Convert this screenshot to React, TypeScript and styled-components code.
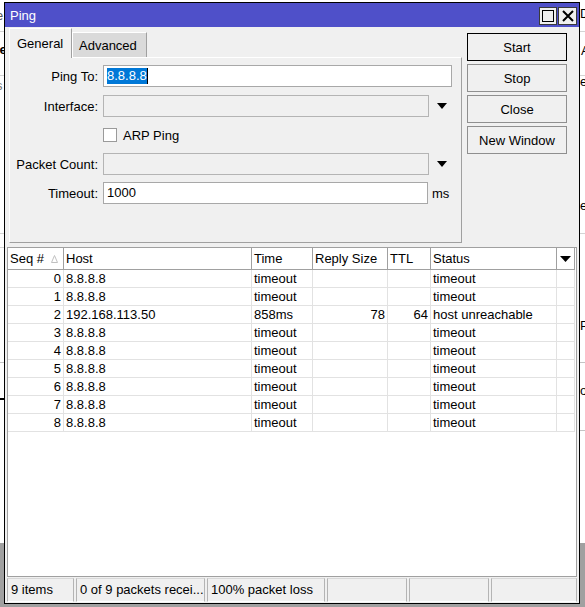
import React from 'react';
import styled, { createGlobalStyle } from 'styled-components';

const GlobalStyle = createGlobalStyle`
  html, body { margin: 0; padding: 0; }
  body {
    font-family: "Liberation Sans", Arial, sans-serif;
    font-size: 13px;
    color: #000;
    background: #fff;
  }
  * { box-sizing: border-box; }
`;

const Desktop = styled.div`
  position: relative;
  width: 585px;
  height: 607px;
  overflow: hidden;
  background: #fff;
`;

/* ---------- background window fragments (behind the Ping window) ---------- */
const BackRule = styled.div<{ $top: number; $color?: string; $h?: number; $side?: 'left' | 'right' }>`
  position: absolute;
  left: ${(p) => (p.$side === 'right' ? '560px' : '0')};
  right: ${(p) => (p.$side === 'left' ? '560px' : '0')};
  top: ${(p) => p.$top}px;
  height: ${(p) => p.$h ?? 1}px;
  background: ${(p) => p.$color ?? '#d4d4d4'};
`;

const BackFill = styled.div<{ $top: number }>`
  position: absolute;
  left: 0;
  right: 0;
  top: ${(p) => p.$top}px;
  bottom: 0;
  background: #a0a0a0;
`;

const BackText = styled.span<{ $left: number; $top: number; $bold?: boolean; $color?: string }>`
  position: absolute;
  left: ${(p) => p.$left}px;
  top: ${(p) => p.$top}px;
  font-size: 13px;
  line-height: 15px;
  font-weight: ${(p) => (p.$bold ? 700 : 400)};
  color: ${(p) => p.$color ?? '#000'};
  white-space: nowrap;
`;

/* ---------- window ---------- */
const Window = styled.div`
  position: absolute;
  left: 4px;
  top: 2px;
  width: 576px;
  height: 602px;
  border: 1px solid #000;
  background: #f0f0f0;
  display: flex;
  flex-direction: column;
`;

const TitleBar = styled.div`
  height: 24px;
  flex: none;
  background: #4f50c9;
  display: flex;
  align-items: center;
  padding: 0 2px 0 5px;
  color: #fff;
`;

const TitleText = styled.div`
  flex: 1;
  font-size: 13px;
  line-height: 15px;
`;

const TitleButtons = styled.div`
  display: flex;
  gap: 1px;
  align-self: flex-end;
  margin-bottom: 2px;
`;

const TitleButton = styled.div<{ $w: number }>`
  width: ${(p) => p.$w}px;
  height: 18px;
  border: 1px solid #3a3a3a;
  background: #f0f0f0;
  display: flex;
  align-items: center;
  justify-content: center;
`;

const TopSection = styled.div`
  height: 220px;
  flex: none;
  display: flex;
  gap: 5px;
  padding: 1px 0 0 4px;
`;

const TabArea = styled.div`
  width: 453px;
  display: flex;
  flex-direction: column;
`;

const TabStrip = styled.div`
  height: 29px;
  display: flex;
  align-items: flex-end;
  position: relative;
  z-index: 1;
`;

const Tab = styled.div<{ $active?: boolean; $w: number }>`
  width: ${(p) => p.$w}px;
  height: ${(p) => (p.$active ? 30 : 25)}px;
  margin-bottom: ${(p) => (p.$active ? -1 : 0)}px;
  background: ${(p) => (p.$active ? '#f0f0f0' : '#dadada')};
  border-top: 1px solid #fff;
  border-left: 1px solid #fff;
  border-right: 1px solid #a0a0a0;
  padding-left: ${(p) => (p.$active ? 7 : 6)}px;
  padding-top: ${(p) => (p.$active ? 7 : 5)}px;
  line-height: 15px;
`;

const Panel = styled.div`
  height: 186px;
  border-top: 1px solid #fff;
  border-left: 1px solid #fff;
  border-right: 1px solid #a0a0a0;
  border-bottom: 1px solid #a0a0a0;
  padding-top: 7px;
  display: flex;
  flex-direction: column;
`;

const FormRow = styled.div<{ $mt?: number }>`
  display: flex;
  align-items: center;
  height: 22px;
  margin-top: ${(p) => p.$mt ?? 0}px;
`;

const Label = styled.div`
  width: 88px;
  flex: none;
  text-align: right;
  margin-right: 5px;
  white-space: nowrap;
`;

const Field = styled.div<{ $w: number; $disabled?: boolean }>`
  width: ${(p) => p.$w}px;
  height: 22px;
  flex: none;
  border: 1px solid ${(p) => (p.$disabled ? '#b4b4b4' : '#a8a8a8')};
  background: ${(p) => (p.$disabled ? '#f0f0f0' : '#fff')};
  padding-left: 3px;
  line-height: 20px;
  display: flex;
  align-items: center;
`;

const Selected = styled.span`
  background: #0078d7;
  color: #fff;
  line-height: 16px;
`;

const Caret = styled.span`
  width: 1px;
  height: 16px;
  background: #000;
`;

const DropArrow = styled.svg`
  margin-left: 8px;
  flex: none;
`;

const Unit = styled.span`
  margin-left: 4px;
`;

const CheckBox = styled.div`
  width: 14px;
  height: 14px;
  border: 1px solid #9a9a9a;
  background: #fff;
  flex: none;
`;

const CheckLabel = styled.span`
  margin-left: 6px;
`;

const ButtonColumn = styled.div`
  display: flex;
  flex-direction: column;
  gap: 3px;
  margin-top: 5px;
`;

const Button = styled.div<{ $focus?: boolean }>`
  width: 100px;
  height: 28px;
  border: 1px solid ${(p) => (p.$focus ? '#000' : '#8f8f8f')};
  background: #f0f0f0;
  display: flex;
  align-items: center;
  justify-content: center;
`;

/* ---------- table ---------- */
const COLS = '56px 188px 61px 75px 43px 126px 18px';

const Table = styled.div`
  height: 330px;
  flex: none;
  margin: 0 2px;
  border: 1px solid #a0a0a0;
  background: #fff;
  display: flex;
  flex-direction: column;
`;

const HeaderRow = styled.div`
  display: grid;
  grid-template-columns: ${COLS};
  height: 22px;
`;

const HeaderCell = styled.div`
  border-right: 1px solid #a0a0a0;
  border-bottom: 1px solid #a0a0a0;
  padding-left: 2px;
  display: flex;
  align-items: center;
  white-space: nowrap;
  overflow: hidden;
`;

const HeaderMenuCell = styled(HeaderCell)`
  justify-content: center;
  padding-left: 0;
`;

const SortMark = styled.svg`
  margin-left: 7px;
`;

const DataRow = styled.div`
  display: grid;
  grid-template-columns: ${COLS};
  height: 18px;
`;

const DataCell = styled.div<{ $right?: boolean }>`
  border-right: 1px solid #e2e2e2;
  border-bottom: 1px solid #e2e2e2;
  padding: 0 ${(p) => (p.$right ? 2 : 0)}px 0 ${(p) => (p.$right ? 0 : 2)}px;
  text-align: ${(p) => (p.$right ? 'right' : 'left')};
  line-height: 17px;
  white-space: nowrap;
  overflow: hidden;
`;

/* ---------- status bar ---------- */
const StatusBar = styled.div`
  height: 26px;
  flex: none;
  display: flex;
  gap: 2px;
  padding: 1px 2px 1px 2px;
`;

const StatusCell = styled.div<{ $w?: number }>`
  ${(p) => (p.$w ? `width: ${p.$w}px; flex: none;` : 'flex: 1;')}
  height: 24px;
  border-left: 1px solid #b4b4b4;
  border-top: 1px solid #d8d8d8;
  border-right: 1px solid #b4b4b4;
  border-bottom: 1px solid #fff;
  padding-left: 3px;
  line-height: 21px;
  white-space: nowrap;
  overflow: hidden;
`;

type Row = { seq: number; host: string; time: string; size: string; ttl: string; status: string };

const rows: Row[] = [
  { seq: 0, host: '8.8.8.8', time: 'timeout', size: '', ttl: '', status: 'timeout' },
  { seq: 1, host: '8.8.8.8', time: 'timeout', size: '', ttl: '', status: 'timeout' },
  { seq: 2, host: '192.168.113.50', time: '858ms', size: '78', ttl: '64', status: 'host unreachable' },
  { seq: 3, host: '8.8.8.8', time: 'timeout', size: '', ttl: '', status: 'timeout' },
  { seq: 4, host: '8.8.8.8', time: 'timeout', size: '', ttl: '', status: 'timeout' },
  { seq: 5, host: '8.8.8.8', time: 'timeout', size: '', ttl: '', status: 'timeout' },
  { seq: 6, host: '8.8.8.8', time: 'timeout', size: '', ttl: '', status: 'timeout' },
  { seq: 7, host: '8.8.8.8', time: 'timeout', size: '', ttl: '', status: 'timeout' },
  { seq: 8, host: '8.8.8.8', time: 'timeout', size: '', ttl: '', status: 'timeout' },
];

const Arrow = ({ w = 10, h = 6 }: { w?: number; h?: number }) => (
  <svg width={w} height={h} viewBox={`0 0 ${w} ${h}`}>
    <polygon points={`0,0 ${w},0 ${w / 2},${h}`} fill="#000" />
  </svg>
);

export default function App() {
  return (
    <>
      <GlobalStyle />
      <Desktop>
        <BackRule $top={31} />
        <BackRule $top={75} />
        <BackRule $top={233} />
        <BackRule $top={247} $side="left" />
        <BackRule $top={362} $color="#c4c4c4" />
        <BackRule $top={398} $color="#000" $h={2} $side="left" />
        <BackRule $top={430} $color="#c4c4c4" $side="right" />
        <BackFill $top={543} />
        <BackText $left={-4} $top={8} $color="#555">e</BackText>
        <BackText $left={-4} $top={42} $bold>le</BackText>
        <BackText $left={-4} $top={78} $color="#777">s</BackText>
        <BackText $left={580} $top={6}>Di</BackText>
        <BackText $left={581} $top={43}>A</BackText>
        <BackText $left={580} $top={74}>et</BackText>
        <BackText $left={580} $top={198}>e</BackText>
        <BackText $left={580} $top={318}>P</BackText>
        <BackText $left={580} $top={383}>o</BackText>

        <Window>
          <TitleBar>
            <TitleText>Ping</TitleText>
            <TitleButtons>
              <TitleButton $w={18}>
                <svg width="12" height="12" viewBox="0 0 12 12">
                  <rect x="0.5" y="0.5" width="11" height="11" fill="none" stroke="#000" strokeWidth="1" />
                </svg>
              </TitleButton>
              <TitleButton $w={19}>
                <svg width="12" height="12" viewBox="0 0 12 12">
                  <path d="M1 1 L11 11 M11 1 L1 11" stroke="#000" strokeWidth="2" fill="none" />
                </svg>
              </TitleButton>
            </TitleButtons>
          </TitleBar>

          <TopSection>
            <TabArea>
              <TabStrip>
                <Tab $active $w={63}>General</Tab>
                <Tab $w={75}>Advanced</Tab>
              </TabStrip>
              <Panel>
                <FormRow>
                  <Label>Ping To:</Label>
                  <Field $w={349}>
                    <Selected>8.8.8.8</Selected>
                    <Caret />
                  </Field>
                </FormRow>
                <FormRow $mt={8}>
                  <Label>Interface:</Label>
                  <Field $w={326} $disabled />
                  <DropArrow width="10" height="6" viewBox="0 0 10 6">
                    <polygon points="0,0 10,0 5,6" fill="#000" />
                  </DropArrow>
                </FormRow>
                <FormRow $mt={7}>
                  <Label />
                  <CheckBox />
                  <CheckLabel>ARP Ping</CheckLabel>
                </FormRow>
                <FormRow $mt={7}>
                  <Label>Packet Count:</Label>
                  <Field $w={326} $disabled />
                  <DropArrow width="10" height="6" viewBox="0 0 10 6">
                    <polygon points="0,0 10,0 5,6" fill="#000" />
                  </DropArrow>
                </FormRow>
                <FormRow $mt={7}>
                  <Label>Timeout:</Label>
                  <Field $w={325}>1000</Field>
                  <Unit>ms</Unit>
                </FormRow>
              </Panel>
            </TabArea>
            <ButtonColumn>
              <Button $focus>Start</Button>
              <Button>Stop</Button>
              <Button>Close</Button>
              <Button>New Window</Button>
            </ButtonColumn>
          </TopSection>

          <Table>
            <HeaderRow>
              <HeaderCell>
                Seq #
                <SortMark width="7" height="8" viewBox="0 0 7 8">
                  <polygon points="3.5,0.5 6.5,7.5 0.5,7.5" fill="none" stroke="#c0c0c0" strokeWidth="1" />
                </SortMark>
              </HeaderCell>
              <HeaderCell>Host</HeaderCell>
              <HeaderCell>Time</HeaderCell>
              <HeaderCell>Reply Size</HeaderCell>
              <HeaderCell>TTL</HeaderCell>
              <HeaderCell>Status</HeaderCell>
              <HeaderMenuCell>
                <Arrow w={11} h={6} />
              </HeaderMenuCell>
            </HeaderRow>
            {rows.map((r) => (
              <DataRow key={r.seq}>
                <DataCell $right>{r.seq}</DataCell>
                <DataCell>{r.host}</DataCell>
                <DataCell>{r.time}</DataCell>
                <DataCell $right>{r.size}</DataCell>
                <DataCell $right>{r.ttl}</DataCell>
                <DataCell>{r.status}</DataCell>
                <DataCell />
              </DataRow>
            ))}
          </Table>

          <StatusBar>
            <StatusCell $w={67}>9 items</StatusCell>
            <StatusCell $w={129}>0 of 9 packets recei...</StatusCell>
            <StatusCell $w={118}>100% packet loss</StatusCell>
            <StatusCell $w={80} />
            <StatusCell $w={80} />
            <StatusCell />
          </StatusBar>
        </Window>
      </Desktop>
    </>
  );
}
